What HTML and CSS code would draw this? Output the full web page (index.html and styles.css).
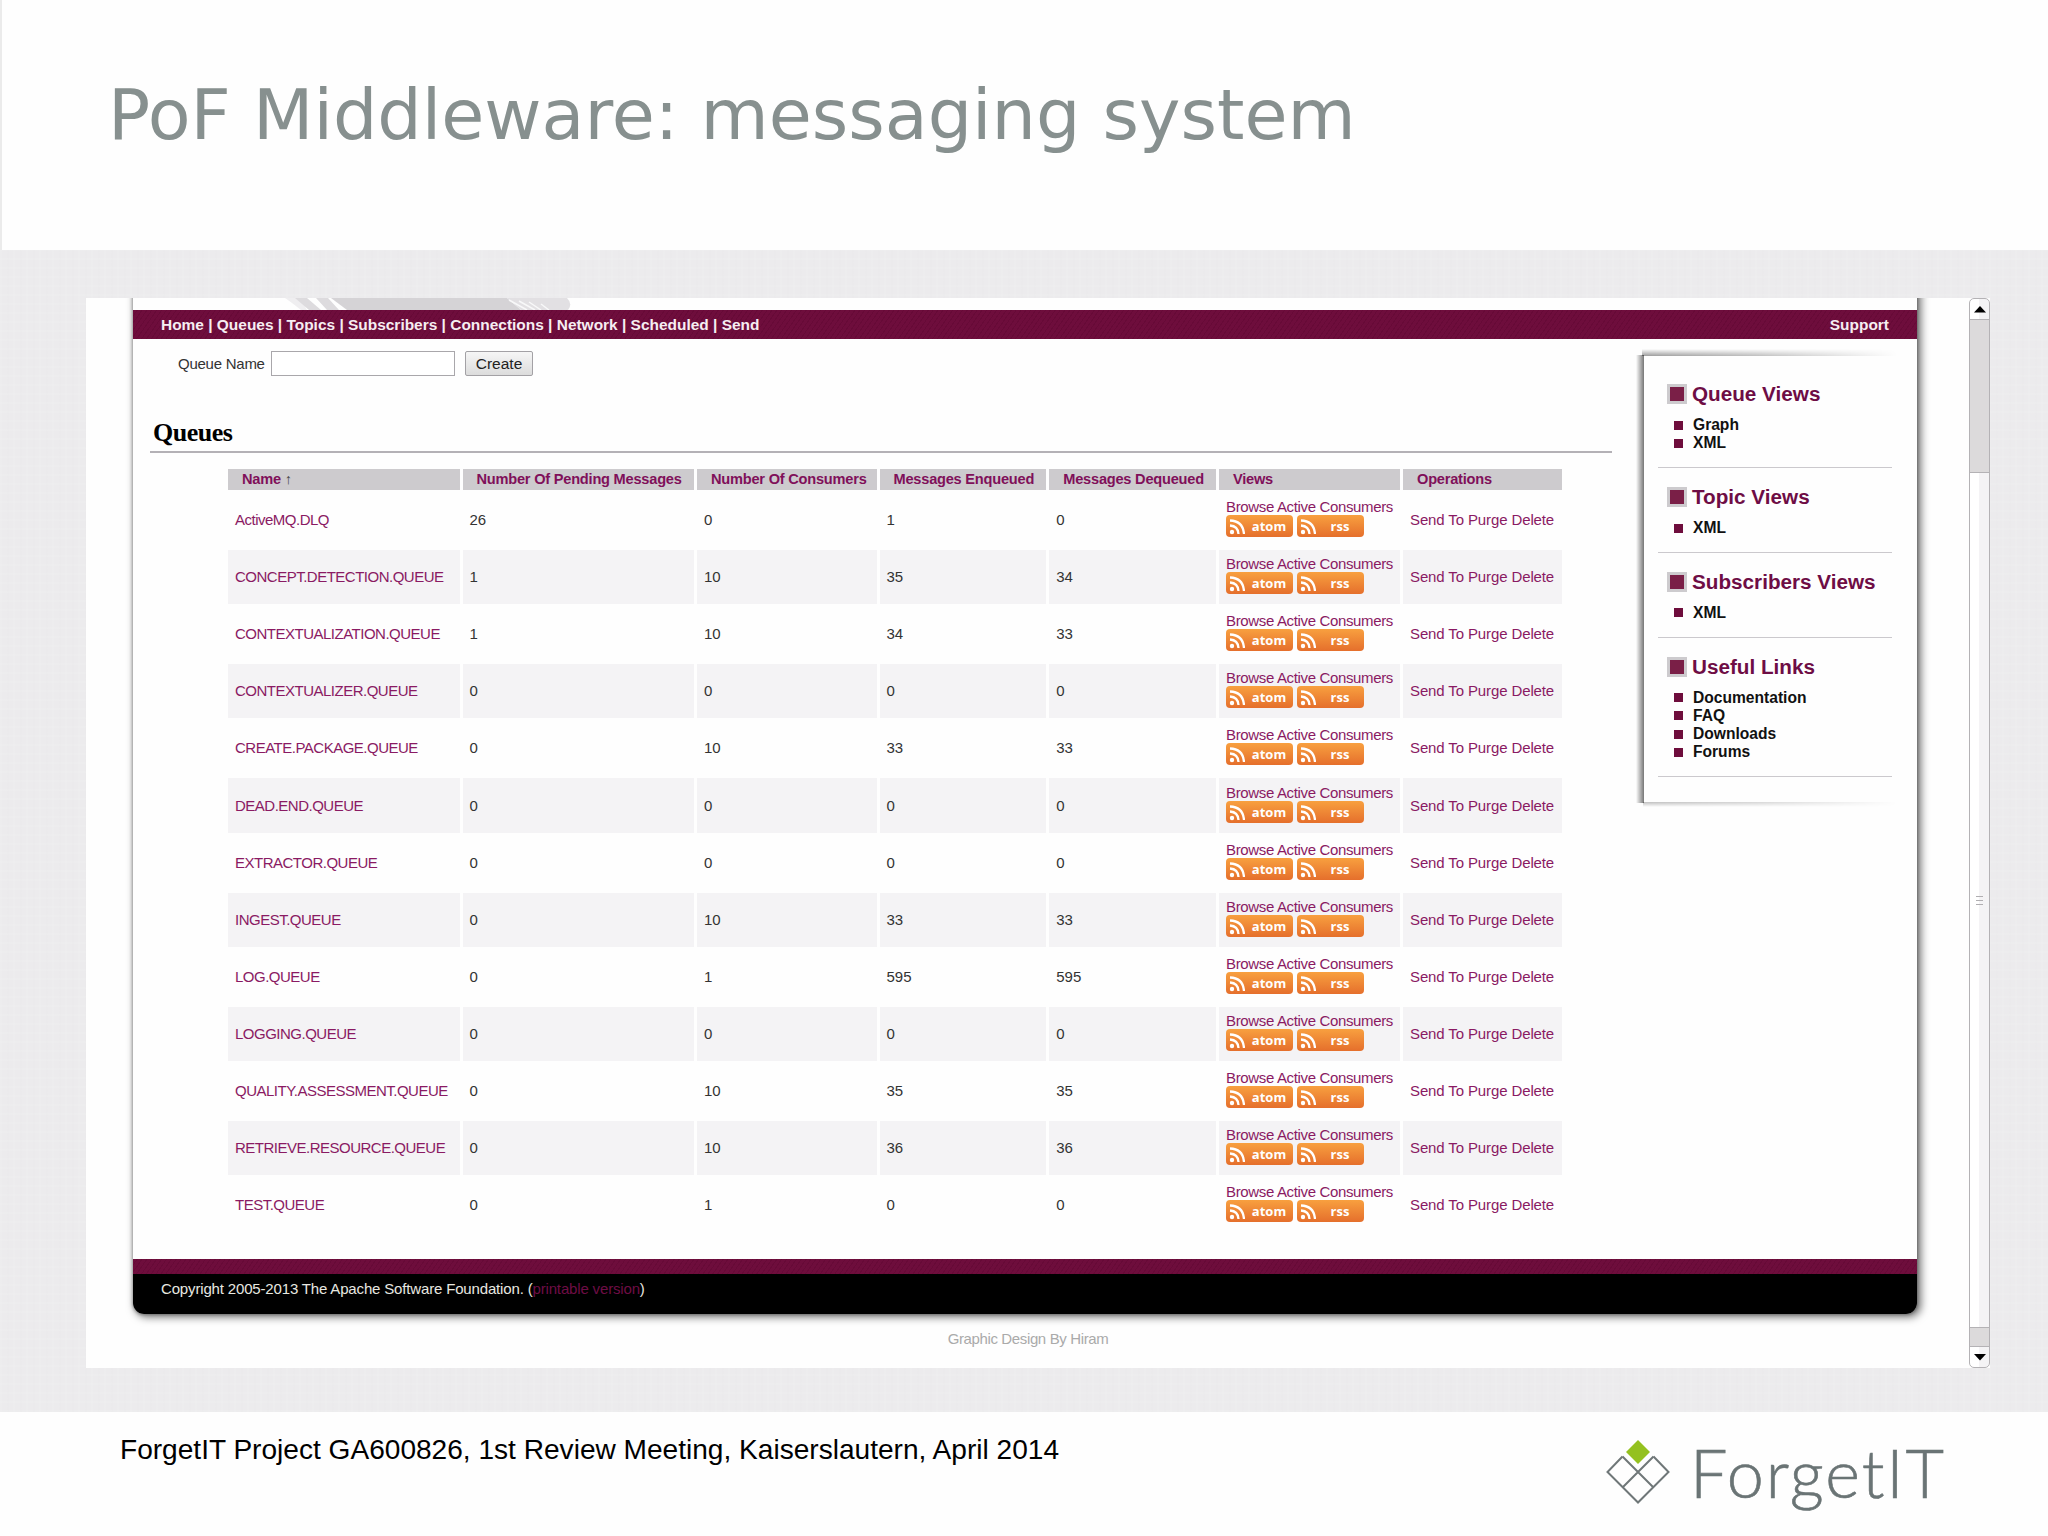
FILE: index.html
```html
<!DOCTYPE html>
<html lang="en">
<head>
    <meta charset="UTF-8">
    <title>PoF Middleware: messaging system</title>
    <link rel="stylesheet" href="styles.css">
</head>
<body>
    <header class="slide-header">
        <h1>PoF Middleware: messaging system</h1>
    </header>

    <main class="slide-body">
        <div class="browser">
            <div class="page">
                <div class="site">
                    <div class="banner">
                        <svg width="290" height="12" viewBox="0 0 290 12">
                            <path d="M0 0H15L22 12H16Q6 4 0 0Z" fill="#efeef0"/>
                            <path d="M10 0H22L36 12H24Z" fill="#dddbde"/>
                            <path d="M31 0H43L54 12H42Z" fill="#dddbde"/>
                            <path d="M46 0H222L236 12H62Z" fill="#d5d3d6"/>
                            <path d="M222 0H282Q288 6 283 12H236Z" fill="#e2e0e3"/>
                            <path d="M224 2l18 10M234 3l16 9M244 4l12 8M256 6l8 6" stroke="#f8f8f9" stroke-width="1.5"/>
                        </svg>
                    </div>
                    <nav class="nav">
                        <span>Home | Queues | Topics | Subscribers | Connections | Network | Scheduled | Send</span>
                        <span>Support</span>
                    </nav>

                    <div class="columns">
                        <div class="content">
                            <form class="create">
                                <label for="queueName">Queue Name</label>
                                <input type="text" id="queueName">
                                <button type="button">Create</button>
                            </form>
                            <h2>Queues</h2>
                            <table id="queues">
                                <colgroup>
                                    <col class="c-name"><col class="c-pending"><col class="c-consumers"><col class="c-enq"><col class="c-deq"><col class="c-views"><col class="c-ops">
                                </colgroup>
                                <thead>
                                    <tr>
                                        <th>Name <i>↑</i></th>
                                        <th>Number Of Pending Messages</th>
                                        <th>Number Of Consumers</th>
                                        <th>Messages Enqueued</th>
                                        <th>Messages Dequeued</th>
                                        <th>Views</th>
                                        <th>Operations</th>
                                    </tr>
                                </thead>
                                <tbody></tbody>
                            </table>
                        </div>

                        <aside class="sidebar">
                            <section>
                                <h3>Queue Views</h3>
                                <ul><li>Graph</li><li>XML</li></ul>
                            </section>
                            <section>
                                <h3>Topic Views</h3>
                                <ul><li>XML</li></ul>
                            </section>
                            <section>
                                <h3>Subscribers Views</h3>
                                <ul><li>XML</li></ul>
                            </section>
                            <section>
                                <h3>Useful Links</h3>
                                <ul><li>Documentation</li><li>FAQ</li><li>Downloads</li><li>Forums</li></ul>
                            </section>
                        </aside>
                    </div>

                    <footer class="site-footer">
                        <p>Copyright 2005-2013 The Apache Software Foundation. (<a>printable version</a>)</p>
                    </footer>
                </div>
                <p class="credit">Graphic Design By Hiram</p>
            </div>

            <div class="scrollbar">
                <div class="arrow"><svg width="12" height="7" viewBox="0 0 12 7"><path d="M6 0L12 6.5H0Z"/></svg></div>
                <div class="thumb"></div>
                <div class="track"><span></span><span></span><span></span></div>
                <div class="thumb small"></div>
                <div class="arrow"><svg width="12" height="7" viewBox="0 0 12 7"><path d="M6 6.5L12 0H0Z"/></svg></div>
            </div>
        </div>
    </main>

    <footer class="slide-footer">
        <p>ForgetIT Project GA600826, 1st Review Meeting, Kaiserslautern, April 2014</p>
        <div class="logo">
            <svg width="64" height="66" viewBox="0 0 64 66">
                <path d="M32 1L44 13L32 25L20 13Z" fill="#94c11f"/>
                <g fill="none" stroke="#6f7778" stroke-width="2">
                    <path d="M16.500 17.500L47.500 48.500M47.500 17.500L16.500 48.500"/>
                    <path d="M16.500 17.500L1.500 33L32 63.500L62.500 33L47.500 17.500"/>
                </g>
            </svg>
            <span>ForgetIT</span>
        </div>
    </footer>

    <script src="queues.js"></script>
</body>
</html>
```
FILE: styles.css
```css
* {
    box-sizing: border-box;
}
body {
    margin: 0;
    width: 2048px;
    height: 1536px;
    overflow: hidden;
    background: #fefefe;
    font-family: "Liberation Sans", Arial, sans-serif;
}
h1, h2, h3, p, ul {
    margin: 0;
    padding: 0;
}

/* slide */
.slide-header {
    height: 250px;
    padding: 74px 0 0 106px;
    border-left: 2px solid #ebebeb;
}
.slide-header h1 {
    font: 400 70px/82px "DejaVu Sans", sans-serif;
    color: #87908f;
    white-space: nowrap;
}
.slide-body {
    height: 1162px;
    padding: 48px 0 0 86px;
    background:
        repeating-linear-gradient(90deg, rgba(255,255,255,.08) 0 2px, transparent 2px 7px, rgba(0,0,0,.004) 7px 9px, transparent 9px 13px),
        repeating-linear-gradient(0deg, rgba(255,255,255,.08) 0 2px, transparent 2px 9px),
        #ecebed;
}
.slide-footer {
    height: 124px;
    padding: 0 103px 0 120px;
    display: flex;
    justify-content: space-between;
}
.slide-footer p {
    padding-top: 22px;
    font-size: 28.080px;
    line-height: 32px;
    color: #000;
}
.logo {
    display: flex;
    gap: 20px;
    padding-top: 27px;
}
.logo span {
    width: 255px;
    margin-top: -3px;
    font: 300 66.500px/72px Lato, sans-serif;
    letter-spacing: 1.900px;
    -webkit-text-stroke: .6px #6a7475;
    color: #6a7475;
    white-space: nowrap;
}

/* captured browser window */
.browser {
    width: 1904px;
    height: 1070px;
    display: flex;
    overflow: hidden;
    background: #fefefe;
}
.page {
    width: 1883px;
    padding-left: 47px;
    overflow: hidden;
}
.site {
    width: 1784px;
    height: 1036px;
    margin-top: -20px;
    padding-top: 20px;
    display: flex;
    flex-direction: column;
    border-radius: 0 0 11px 11px;
    background: #fefefe;
    box-shadow: 3px 2px 8px 1px rgba(0,0,0,.55), 0 0 3px 1px rgba(0,0,0,.25);
}
.banner {
    height: 12px;
    padding-left: 152px;
}
.banner svg {
    display: block;
}
.nav {
    height: 29px;
    padding: 0 28px;
    display: flex;
    justify-content: space-between;
    font-size: 15.460px;
    font-weight: bold;
    line-height: 30px;
    color: #f6eef2;
    background: repeating-linear-gradient(125deg, #6e0d3c 0 3px, #670a37 3px 4px);
}
.columns {
    flex: 1;
    display: flex;
}
.content {
    width: 1479px;
    padding: 12px 0 0 17px;
}
.create {
    display: flex;
    align-items: center;
    padding-left: 28px;
    font-size: 15px;
    letter-spacing: -.25px;
    color: #333;
}
.create label {
    width: 93px;
}
.create input {
    width: 184px;
    height: 25px;
    border: 1.500px solid #a9a7ab;
    background: #fff;
}
.create button {
    width: 68px;
    height: 25px;
    margin-left: 10px;
    padding: 0;
    font: 15.500px "Liberation Sans", Arial, sans-serif;
    color: #222;
    border: 1px solid #a3a1a5;
    border-radius: 2px;
    background: linear-gradient(#f6f6f6, #dcdcdc);
}
.content h2 {
    width: 1462px;
    height: 77px;
    padding: 43px 0 0 3px;
    font: bold 26px/28px "Liberation Serif", "Times New Roman", serif;
    letter-spacing: -.5px;
    color: #000;
    border-bottom: 2px solid #b4b1b6;
}

/* queues table */
#queues {
    width: 1339.500px;
    margin: 13px 0 0 75px;
    table-layout: fixed;
    border-collapse: separate;
    border-spacing: 3px;
    font-size: 15px;
    color: #333;
}
.c-name, .c-pending { width: 231.500px; }
.c-consumers { width: 179.500px; }
.c-enq, .c-deq { width: 166.750px; }
.c-views { width: 181px; }
.c-ops { width: 158.500px; }
#queues th {
    height: 21px;
    padding: 0 0 1px 14px;
    text-align: left;
    font-size: 14.600px;
    letter-spacing: -.22px;
    line-height: 20px;
    color: #80105a;
    background: #cdcbce;
    white-space: nowrap;
}
#queues th i {
    font-style: normal;
    font-weight: normal;
    color: #444;
}
#queues td {
    height: 54.100px;
    padding: 0 0 1px 7px;
    white-space: nowrap;
}
#queues tbody tr:nth-child(even) td {
    background: #f4f3f5;
}
#queues a {
    letter-spacing: -.12px;
    color: #8a1a63;
}
#queues td:first-child a {
    letter-spacing: -.5px;
}
#queues .views {
    padding-bottom: 5px;
}
#queues .views a {
    display: block;
    line-height: 17px;
    letter-spacing: -.35px;
}
.feeds {
    display: flex;
    gap: 4px;
}
.feed {
    width: 67px;
    height: 22px;
    padding-left: 3px;
    display: flex;
    align-items: center;
    border-radius: 4px;
    background: linear-gradient(#f8a03f, #e56f2c);
    color: #fff;
}
.feed span {
    flex: 1;
    text-align: center;
    font: bold 13px/20px "Open Sans", sans-serif;
}

/* sidebar */
.sidebar {
    width: 290px;
    height: 446px;
    margin: 17px 0 0 32px;
    padding: 26px 0 0 14px;
    position: relative;
}
/* shadow that fades out to the right */
.sidebar::before {
    content: "";
    position: absolute;
    inset: -10px 0 -10px -10px;
    border-radius: 12px;
    -webkit-mask-image: linear-gradient(90deg, #000 0, rgba(0,0,0,.6) 45%, transparent 93%);
    mask-image: linear-gradient(90deg, #000 0, rgba(0,0,0,.6) 45%, transparent 93%);
    background:
        linear-gradient(0deg, rgba(0,0,0,.4), transparent) 8px 3px / 100% 7px no-repeat,
        linear-gradient(270deg, rgba(0,0,0,.55), transparent) 2px 9px / 8px 448px no-repeat,
        linear-gradient(180deg, rgba(0,0,0,.25), transparent) 9px 456px / 100% 5px no-repeat;
}
.sidebar section {
    position: relative;
    width: 234px;
    margin-bottom: 17px;
    padding: 0 0 14.800px 9px;
    border-bottom: 1.500px solid #cbc9cd;
}
.sidebar h3 {
    display: flex;
    align-items: center;
    gap: 5px;
    height: 24px;
    font-size: 20.700px;
    color: #6e0d45;
    white-space: nowrap;
}
.sidebar h3::before {
    content: "";
    width: 14px;
    height: 14px;
    border: 3px solid #cdcbce;
    background: #7a1f47;
}
.sidebar ul {
    list-style: none;
    padding-top: 10px;
}
.sidebar li {
    display: flex;
    align-items: center;
    gap: 10px;
    padding-left: 7px;
    height: 18.100px;
    font-size: 15.600px;
    font-weight: bold;
    color: #111;
}
.sidebar li::before {
    content: "";
    width: 9px;
    height: 9px;
    background: #6e0d3c;
}

/* site footer */
.site-footer {
    height: 55px;
    border-radius: 0 0 11px 11px;
    background: #000;
    font-size: 15px;
    letter-spacing: -.16px;
    line-height: 30px;
    color: #e8e8e0;
}
.site-footer::before {
    content: "";
    display: block;
    height: 15px;
    background: repeating-linear-gradient(125deg, #6e0d3c 0 3px, #670a37 3px 4px);
}
.site-footer p {
    padding: 0 28px;
}
.site-footer a {
    color: #6e0d45;
}
.credit {
    width: 1790px;
    padding-top: 16px;
    font-size: 15px;
    letter-spacing: -.37px;
    text-align: center;
    color: #aaa;
}

/* scrollbar */
.scrollbar {
    width: 21px;
    display: flex;
    flex-direction: column;
    border: 1.500px solid #b4b2b5;
    border-radius: 5px;
    background: linear-gradient(90deg, #fff 50%, #f4f3f5 50%);
}
.arrow {
    height: 20px;
    display: flex;
    align-items: center;
    justify-content: center;
}
.thumb {
    height: 154px;
    border: solid #b4b2b5;
    border-width: 1px 0;
    background: #dcdadb;
}
.thumb.small {
    height: 20px;
}
.track {
    flex: 1;
    display: flex;
    flex-direction: column;
    align-items: center;
    justify-content: center;
    gap: 3px;
}
.track span {
    width: 7px;
    height: 1px;
    background: #b0aeb1;
}
```
FILE: queues.js
```js
// name, pending, consumers, enqueued, dequeued
const queues = [
    ['ActiveMQ.DLQ', 26, 0, 1, 0],
    ['CONCEPT.DETECTION.QUEUE', 1, 10, 35, 34],
    ['CONTEXTUALIZATION.QUEUE', 1, 10, 34, 33],
    ['CONTEXTUALIZER.QUEUE', 0, 0, 0, 0],
    ['CREATE.PACKAGE.QUEUE', 0, 10, 33, 33],
    ['DEAD.END.QUEUE', 0, 0, 0, 0],
    ['EXTRACTOR.QUEUE', 0, 0, 0, 0],
    ['INGEST.QUEUE', 0, 10, 33, 33],
    ['LOG.QUEUE', 0, 1, 595, 595],
    ['LOGGING.QUEUE', 0, 0, 0, 0],
    ['QUALITY.ASSESSMENT.QUEUE', 0, 10, 35, 35],
    ['RETRIEVE.RESOURCE.QUEUE', 0, 10, 36, 36],
    ['TEST.QUEUE', 0, 1, 0, 0]
];

function feed(label) {
    return `<div class="feed">
        <svg width="16" height="18" viewBox="0 0 16 18" fill="none" stroke="#fff" stroke-width="2.3">
            <circle cx="3" cy="15" r="2.2" fill="#fff" stroke="none"/>
            <path d="M1 8.500Q9 9 9.500 17M1 3.500Q14 4 15 17"/>
        </svg>
        <span>${label}</span>
    </div>`;
}

document.querySelector('#queues tbody').innerHTML = queues.map(([name, ...counts]) => `
    <tr>
        <td><a>${name}</a></td>
        ${counts.map(count => `<td>${count}</td>`).join('')}
        <td class="views"><a>Browse Active Consumers</a><div class="feeds">${feed('atom')}${feed('rss')}</div></td>
        <td><a>Send To Purge Delete</a></td>
    </tr>`).join('');
```
